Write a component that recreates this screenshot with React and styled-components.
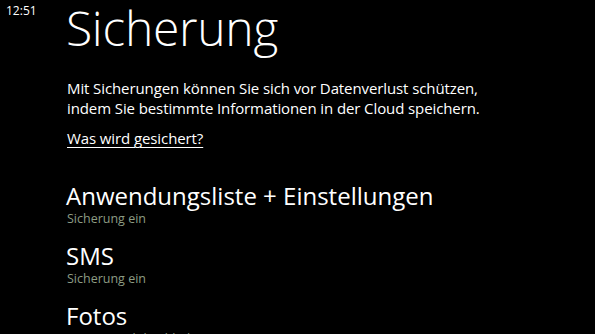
import React from 'react';
import styled, {createGlobalStyle} from 'styled-components';

// Global

const GlobalStyle = createGlobalStyle`
    html, body {
        margin: 0;
        padding: 0;
        background: #000;
    }
    body {
        font-family: "Open Sans", "Noto Sans", sans-serif;
        color: #fff;
    }
`

// Styled Components

const Screen = styled.div`
    display: flex;
    flex-direction: row;
    width: 595px;
    height: 334px;
    overflow: hidden;
    background: #000;
`

const StatusBar = styled.div`
    width: 66px;
    flex-shrink: 0;
    padding: 3px 0 0 6px;
    box-sizing: border-box;
    font-size: 12px;
    line-height: 16px;
    color: #fff;
`

const Content = styled.div`
    display: flex;
    flex-direction: column;
`

const Title = styled.h1`
    margin: -5px 0 0 0;
    font-family: "Open Sans Light", "Open Sans", sans-serif;
    font-size: 48px;
    font-weight: 300;
    line-height: 66px;
    letter-spacing: -0.3px;
`

const Intro = styled.p`
    margin: 17px 0 0 1px;
    font-size: 15px;
    line-height: 20px;
    letter-spacing: -0.1px;
`

const HelpLink = styled.a`
    display: block;
    margin: 10px 0 0 1px;
    font-size: 15px;
    line-height: 20px;
    letter-spacing: -0.1px;
    color: #fff;
    text-decoration: underline;
    text-decoration-thickness: 1px;
    text-underline-offset: 3px;
`

const List = styled.div`
    display: flex;
    flex-direction: column;
    gap: 14px;
    margin-top: 33px;
`

const Item = styled.div`
    display: flex;
    flex-direction: column;
`

const ItemTitle = styled.div`
    font-size: 24px;
    line-height: 30px;
    font-weight: 400;
`

const ItemStatus = styled.div`
    margin-left: 1px;
    font-size: 12.5px;
    line-height: 16px;
    color: #8d9c84;
`

const items = [
    {title: 'Anwendungsliste + Einstellungen', status: 'Sicherung ein'},
    {title: 'SMS', status: 'Sicherung ein'},
    {title: 'Fotos', status: 'Automatisch hochladen aus'},
];

// App Component

const App = () => (
    <>
        <GlobalStyle/>
        <Screen>
            <StatusBar>12:51</StatusBar>
            <Content>
                <Title>Sicherung</Title>
                <Intro>
                    Mit Sicherungen können Sie sich vor Datenverlust schützen,<br/>
                    indem Sie bestimmte Informationen in der Cloud speichern.
                </Intro>
                <HelpLink href="#">Was wird gesichert?</HelpLink>
                <List>
                    {items.map(item => (
                        <Item key={item.title}>
                            <ItemTitle>{item.title}</ItemTitle>
                            <ItemStatus>{item.status}</ItemStatus>
                        </Item>
                    ))}
                </List>
            </Content>
        </Screen>
    </>
);

export default App;
